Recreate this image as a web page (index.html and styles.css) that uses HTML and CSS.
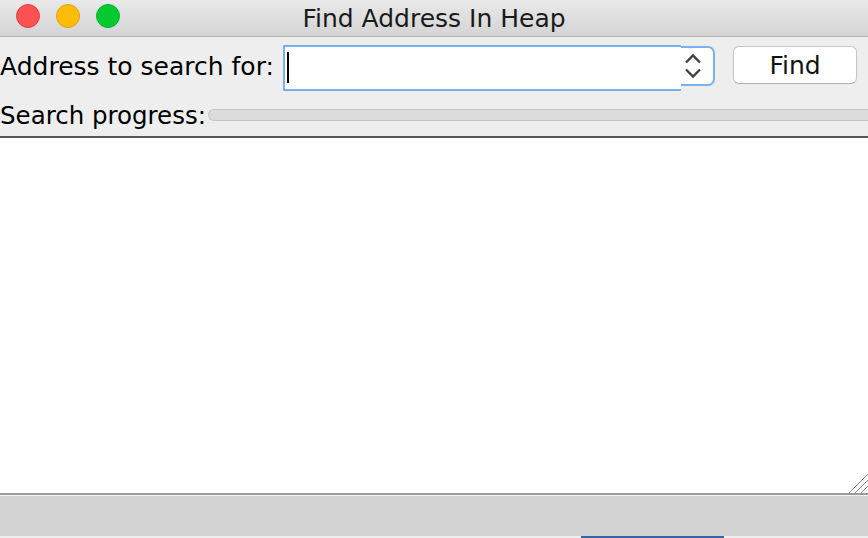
FILE: index.html
```html
<!DOCTYPE html>
<html>
<head>
<meta charset="utf-8">
<link rel="stylesheet" href="styles.css">
</head>
<body>
<div class="window">
  <div class="titlebar">
    <div class="lights">
      <span class="light red"></span>
      <span class="light yellow"></span>
      <span class="light green"></span>
    </div>
    <div class="title">Find Address In Heap</div>
  </div>
  <div class="controls">
    <div class="row row-search">
      <label class="label">Address to search for:</label>
      <div class="combo">
        <div class="field"><span class="caret"></span></div>
        <div class="spinner">
          <svg width="18" height="28" viewBox="0 0 18 28">
            <path d="M2 10.5 L9 3.5 L16 10.5" fill="none" stroke="#3f3f3f" stroke-width="2.3"/>
            <path d="M2 17.5 L9 24.5 L16 17.5" fill="none" stroke="#3f3f3f" stroke-width="2.3"/>
          </svg>
        </div>
      </div>
      <button class="btn">Find</button>
    </div>
    <div class="row row-progress">
      <span class="label">Search progress:</span>
      <div class="progress"></div>
    </div>
  </div>
  <div class="results">
    <svg class="grip" width="20" height="20" viewBox="0 0 20 20">
      <path d="M1 20 L20 1 M7 20 L20 7 M13 20 L20 13" stroke="#8a8a8a" stroke-width="1"/>
    </svg>
  </div>
  <div class="status"></div>
  <div class="bottom"><span class="blue"></span></div>
</div>
</body>
</html>
```
FILE: styles.css
```css
html, body {
  margin: 0;
  padding: 0;
}
body {
  width: 868px;
  height: 538px;
  overflow: hidden;
  background: #eeeeee;
  font-family: "DejaVu Sans", "Liberation Sans", sans-serif;
  color: #000;
}
.window {
  display: flex;
  flex-direction: column;
  height: 538px;
}
.titlebar {
  position: relative;
  height: 36px;
  background: linear-gradient(#e9e9e9, #d4d4d4);
  border-bottom: 1px solid #b4b4b4;
  display: flex;
  align-items: center;
  justify-content: center;
  flex: none;
}
.lights {
  position: absolute;
  left: 16px;
  top: 4px;
  display: flex;
  gap: 16px;
}
.light {
  width: 24px;
  height: 24px;
  border-radius: 50%;
  box-sizing: border-box;
}
.red { background: #fd5251; border: 1px solid #e2403f; }
.yellow { background: #fdbb0a; border: 1px solid #e0a106; }
.green { background: #05c930; border: 1px solid #05ae26; }
.title {
  font-size: 25px;
  line-height: 29px;
  color: #1a1a1a;
}
.controls {
  flex: none;
  height: 99px;
  border-bottom: 2px solid #555555;
  display: flex;
  flex-direction: column;
}
.row {
  display: flex;
  align-items: flex-start;
}
.row-search {
  height: 52px;
  padding-top: 8px;
}
.label {
  font-size: 25px;
  line-height: 29px;
  white-space: nowrap;
}
.row-search .label {
  margin-top: 7px;
  width: 283px;
}
.combo {
  display: flex;
  align-items: flex-start;
  width: 432px;
}
.field {
  width: 398px;
  height: 46px;
  box-sizing: border-box;
  background: #fff;
  border: 2px solid #78b1ee;
  border-right: none;
  padding: 5px 0 0 2px;
}
.caret {
  display: block;
  width: 2px;
  height: 31px;
  background: #000;
}
.spinner {
  width: 34px;
  height: 40px;
  box-sizing: border-box;
  margin-top: 1px;
  background: #fff;
  border: 2px solid #78b1ee;
  border-left: none;
  border-radius: 0 7px 7px 0;
  display: flex;
  align-items: center;
  justify-content: center;
  padding-right: 9px;
}
.btn {
  margin-left: 18px;
  margin-top: 1px;
  width: 124px;
  height: 38px;
  background: #fff;
  border: 1px solid #c4c4c4;
  border-bottom-color: #aeaeae;
  border-radius: 6px;
  font-family: inherit;
  font-size: 25px;
  line-height: 29px;
  color: #111;
  padding: 0;
}
.row-progress {
  height: 39px;
}
.row-progress .label {
  font-size: 24.5px;
  margin-top: 4px;
}
.progress {
  flex: 1;
  height: 12px;
  margin-top: 12px;
  margin-left: 2px;
  box-sizing: border-box;
  background: #dcdcdc;
  border: 1px solid #c6c6c6;
  border-right: none;
  border-radius: 6px 0 0 6px;
}
.results {
  position: relative;
  flex: none;
  height: 355px;
  background: #fff;
  border-bottom: 2px solid #9a9a9a;
}
.grip {
  position: absolute;
  right: 0;
  bottom: 0;
}
.status {
  flex: none;
  height: 40px;
  background: #d3d3d3;
  border-top: 1px solid #f4f4f4;
}
.bottom {
  flex: none;
  height: 2px;
  background: #eeeeee;
  padding-left: 581px;
  display: flex;
}
.blue {
  width: 143px;
  height: 2px;
  background: #3466a6;
}
```
